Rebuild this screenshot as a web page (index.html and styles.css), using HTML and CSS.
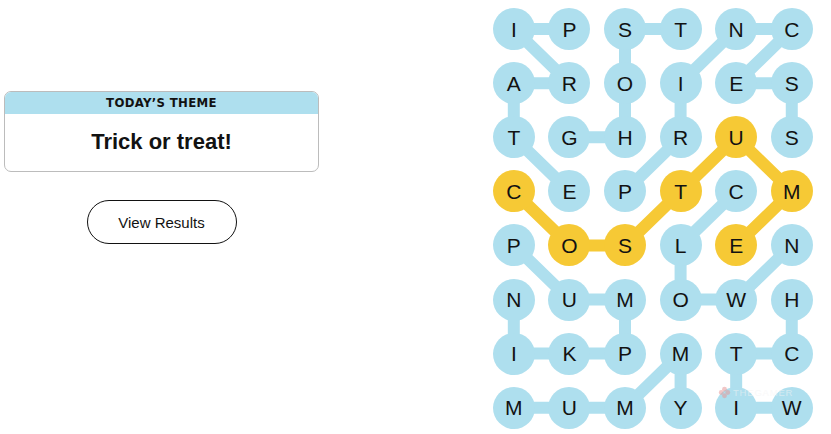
FILE: index.html
```html
<!DOCTYPE html>
<html lang="en">
<head>
  <meta charset="UTF-8">
  <meta name="viewport" content="width=device-width, initial-scale=1.0">
  <title>Strands</title>
  <link rel="stylesheet" href="styles.css">
</head>
<body>

  <main class="page">
    <section class="intro">
      <div class="theme-card">
        <div class="theme-label">Today’s Theme</div>
        <div class="theme-text">Trick or treat!</div>
      </div>
      <button class="results-btn">View Results</button>
    </section>

    <section class="board">
      <!-- connectors: cell centres are (col + .5, row + .5) -->
      <svg class="links" viewBox="0 0 6 8" preserveAspectRatio="none">
        <g class="link">
          <!-- pirate -->
          <line x1="1.5" y1="0.5" x2="0.5" y2="0.5"/>
          <line x1="0.5" y1="0.5" x2="1.5" y2="1.5"/>
          <line x1="1.5" y1="1.5" x2="0.5" y2="1.5"/>
          <line x1="0.5" y1="1.5" x2="0.5" y2="2.5"/>
          <line x1="0.5" y1="2.5" x2="1.5" y2="3.5"/>
          <!-- ghost -->
          <line x1="1.5" y1="2.5" x2="2.5" y2="2.5"/>
          <line x1="2.5" y1="2.5" x2="2.5" y2="1.5"/>
          <line x1="2.5" y1="1.5" x2="2.5" y2="0.5"/>
          <line x1="2.5" y1="0.5" x2="3.5" y2="0.5"/>
          <!-- princess -->
          <line x1="2.5" y1="3.5" x2="3.5" y2="2.5"/>
          <line x1="3.5" y1="2.5" x2="3.5" y2="1.5"/>
          <line x1="3.5" y1="1.5" x2="4.5" y2="0.5"/>
          <line x1="4.5" y1="0.5" x2="5.5" y2="0.5"/>
          <line x1="5.5" y1="0.5" x2="4.5" y2="1.5"/>
          <line x1="4.5" y1="1.5" x2="5.5" y2="1.5"/>
          <line x1="5.5" y1="1.5" x2="5.5" y2="2.5"/>
          <!-- clown -->
          <line x1="4.5" y1="3.5" x2="3.5" y2="4.5"/>
          <line x1="3.5" y1="4.5" x2="3.5" y2="5.5"/>
          <line x1="3.5" y1="5.5" x2="4.5" y2="5.5"/>
          <line x1="4.5" y1="5.5" x2="5.5" y2="4.5"/>
          <!-- pumpkin -->
          <line x1="0.5" y1="4.5" x2="1.5" y2="5.5"/>
          <line x1="1.5" y1="5.5" x2="2.5" y2="5.5"/>
          <line x1="2.5" y1="5.5" x2="2.5" y2="6.5"/>
          <line x1="2.5" y1="6.5" x2="0.5" y2="6.5"/>
          <line x1="0.5" y1="6.5" x2="0.5" y2="5.5"/>
          <!-- witch -->
          <line x1="5.5" y1="7.5" x2="4.5" y2="7.5"/>
          <line x1="4.5" y1="7.5" x2="4.5" y2="6.5"/>
          <line x1="4.5" y1="6.5" x2="5.5" y2="6.5"/>
          <line x1="5.5" y1="6.5" x2="5.5" y2="5.5"/>
          <!-- mummy -->
          <line x1="0.5" y1="7.5" x2="2.5" y2="7.5"/>
          <line x1="2.5" y1="7.5" x2="3.5" y2="6.5"/>
          <line x1="3.5" y1="6.5" x2="3.5" y2="7.5"/>
        </g>
        <g class="link spangram">
          <!-- costume -->
          <line x1="0.5" y1="3.5" x2="1.5" y2="4.5"/>
          <line x1="1.5" y1="4.5" x2="2.5" y2="4.5"/>
          <line x1="2.5" y1="4.5" x2="3.5" y2="3.5"/>
          <line x1="3.5" y1="3.5" x2="4.5" y2="2.5"/>
          <line x1="4.5" y1="2.5" x2="5.5" y2="3.5"/>
          <line x1="5.5" y1="3.5" x2="4.5" y2="4.5"/>
        </g>
      </svg>

      <div class="grid">
        <span class="cell">I</span><span class="cell">P</span><span class="cell">S</span><span class="cell">T</span><span class="cell">N</span><span class="cell">C</span>
        <span class="cell">A</span><span class="cell">R</span><span class="cell">O</span><span class="cell">I</span><span class="cell">E</span><span class="cell">S</span>
        <span class="cell">T</span><span class="cell">G</span><span class="cell">H</span><span class="cell">R</span><span class="cell gold">U</span><span class="cell">S</span>
        <span class="cell gold">C</span><span class="cell">E</span><span class="cell">P</span><span class="cell gold">T</span><span class="cell">C</span><span class="cell gold">M</span>
        <span class="cell">P</span><span class="cell gold">O</span><span class="cell gold">S</span><span class="cell">L</span><span class="cell gold">E</span><span class="cell">N</span>
        <span class="cell">N</span><span class="cell">U</span><span class="cell">M</span><span class="cell">O</span><span class="cell">W</span><span class="cell">H</span>
        <span class="cell">I</span><span class="cell">K</span><span class="cell">P</span><span class="cell">M</span><span class="cell">T</span><span class="cell">C</span>
        <span class="cell">M</span><span class="cell">U</span><span class="cell">M</span><span class="cell">Y</span><span class="cell">I</span><span class="cell">W</span>
      </div>

      <div class="watermark">
        <svg class="mark-icon" viewBox="0 0 14 14">
          <circle cx="7" cy="3.5" r="2.6"/>
          <circle cx="3.5" cy="7" r="2.6"/>
          <circle cx="10.5" cy="7" r="2.6"/>
          <circle cx="7" cy="10.5" r="2.6"/>
        </svg>
        <span>THEGAMER</span>
      </div>
    </section>
  </main>

</body>
</html>
```

FILE: styles.css
```css
body {
  margin: 0;
  font-family: "Liberation Sans", Arial, sans-serif;
  color: #121212;
  background: #fff;
}
.page {
  display: flex;
  align-items: flex-start;
}

/* left column */
.intro {
  width: 315px;
  margin: 91px 0 0 4px;
  display: flex;
  flex-direction: column;
  align-items: center;
}
.theme-card {
  width: 315px;
  box-sizing: border-box;
  border: 1px solid #bcbcbc;
  border-radius: 7px;
  overflow: hidden;
}
.theme-label {
  height: 23px;
  margin: -1px -1px 0;
  background: #aedfee;
  font-family: "DejaVu Sans Condensed", "Liberation Sans Narrow", sans-serif;
  font-weight: 700;
  font-size: 13px;
  letter-spacing: 0.35px;
  text-transform: uppercase;
  line-height: 24px;
  text-align: center;
}
.theme-text {
  height: 57px;
  font-weight: 700;
  font-size: 22px;
  line-height: 55px;
  text-align: center;
}
.results-btn {
  width: 150px;
  height: 44px;
  margin-top: 28px;
  border: 1px solid #121212;
  border-radius: 22px;
  background: #fff;
  font-family: "Liberation Sans", Arial, sans-serif;
  font-size: 15px;
  color: #121212;
}

/* board */
.board {
  position: relative;
  margin: 2px 0 0 167px;
}
.links {
  position: absolute;
  left: 0;
  top: 0;
  width: 100%;
  height: 100%;
}
.link line {
  stroke: #aedfee;
  stroke-width: 12px;
  stroke-linecap: round;
  vector-effect: non-scaling-stroke;
}
.spangram line {
  stroke: #f6c935;
}
.grid {
  position: relative;
  display: grid;
  grid-template-columns: repeat(6, 55.6px);
  grid-template-rows: repeat(8, 54.1px);
  place-items: center;
}
.cell {
  width: 42px;
  height: 42px;
  border-radius: 50%;
  background: #aedfee;
  display: flex;
  align-items: center;
  justify-content: center;
  font-size: 21px;
  line-height: 1;
}
.cell.gold {
  background: #f6c935;
}

.watermark {
  position: absolute;
  left: 232px;
  top: 384px;
  display: flex;
  align-items: center;
  gap: 2px;
  opacity: 0.55;
  font-size: 9.5px;
  line-height: 9px;
  letter-spacing: 0.8px;
  color: #f4f4f4;
}
.mark-icon {
  width: 13px;
  height: 13px;
  fill: #e69a9a;
}
```
